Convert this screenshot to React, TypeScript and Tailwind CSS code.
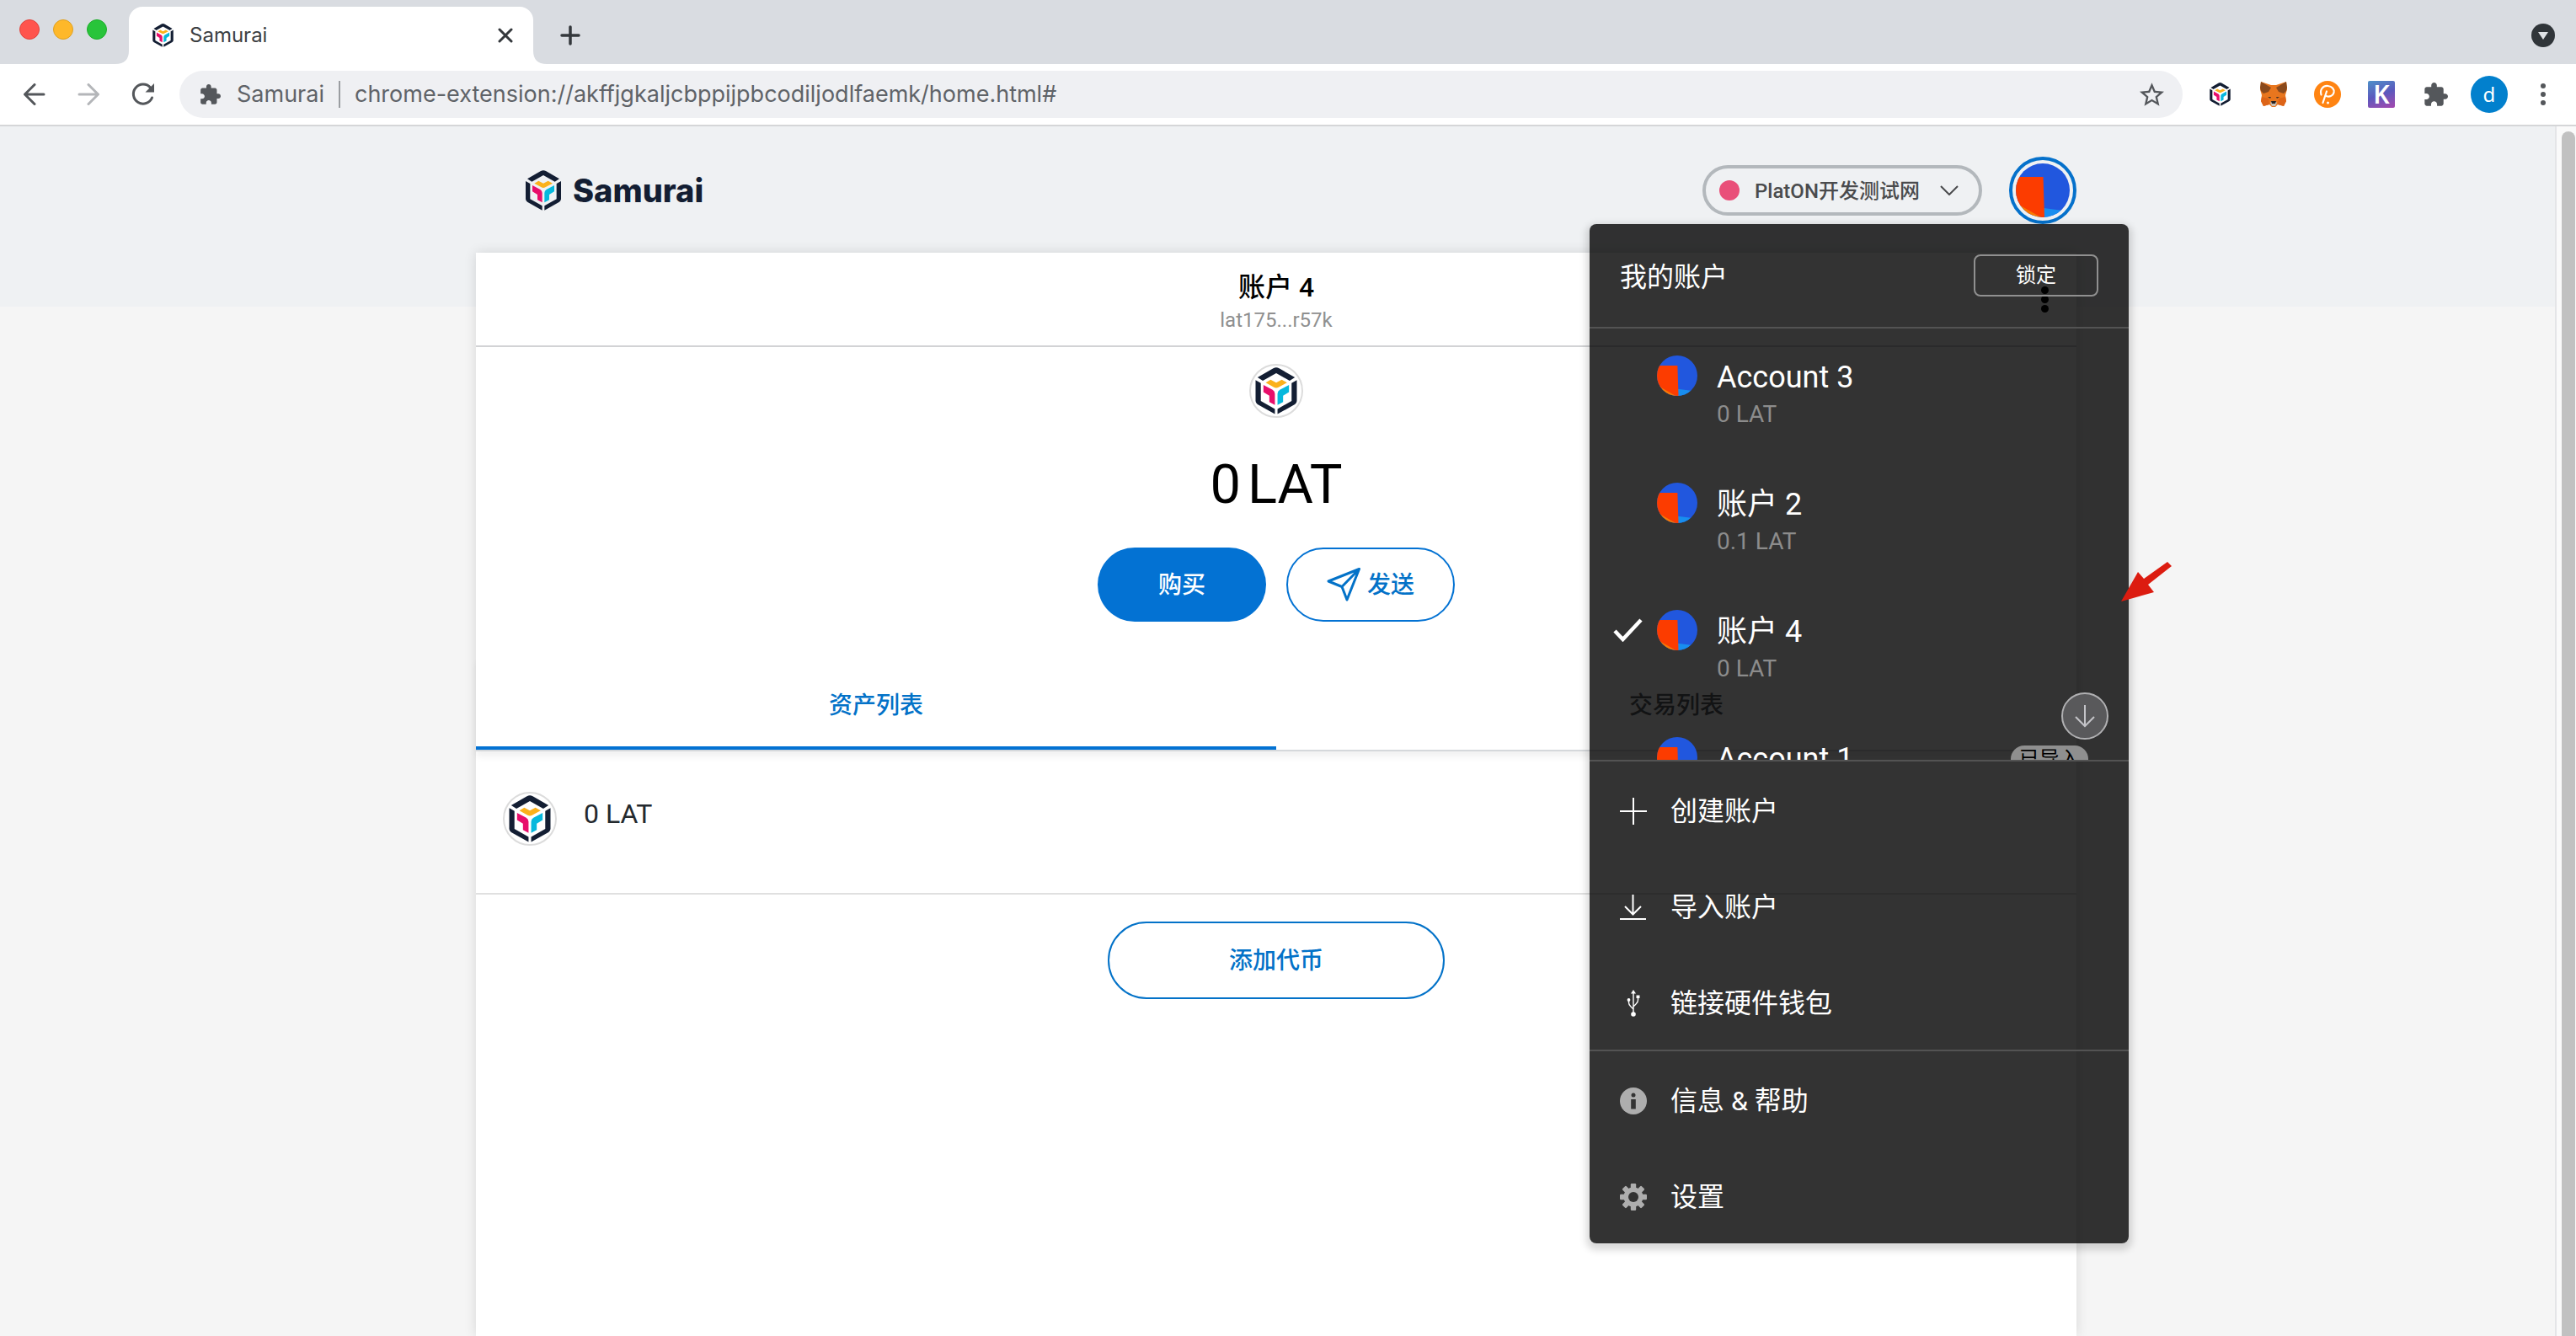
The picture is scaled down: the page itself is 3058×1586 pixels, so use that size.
import type { ReactNode } from "react";

const CJK = "font-['Roboto','Noto_Sans_CJK_SC',sans-serif]";

function SamuraiMark({ className }: { className: string }) {
  return (
    <svg viewBox="0 0 126 144" className={className} aria-hidden="true">
      <g fill="#131e33">
        <path d="M6 31 54 3Q63-2 72 3L120 31 104 41 63 18 22 41Z" />
        <path d="M0 39 16 48V103L59 127V143L6 113Q0 109 0 103Z" />
        <path d="M126 39 110 48V103L67 127V143L120 113Q126 109 126 103Z" />
      </g>
      <path fill="#fbb11b" d="M31 47 46 38 63 47 80 38 96 47 70 61Q63 65 56 61Z" />
      <path fill="#e80e6b" d="M24 54 52 69Q59 73 59 81V115L42 106V87L24 76Z" />
      <path fill="#06b8dd" d="M102 54 74 69Q67 73 67 81V115L84 106V87L102 76Z" />
    </svg>
  );
}

function Identicon({ className }: { className: string }) {
  return (
    <svg viewBox="0 0 64 64" className={`shrink-0 rounded-full ${className}`} aria-hidden="true">
      <rect width="64" height="64" fill="#2157de" />
      <path d="M33 53 64 57V64H33Z" fill="#188eef" />
      <path d="M0 46 34 66H0Z" fill="#fa7900" />
      <path d="M0 16H32.500L34 64H30L0 47Z" fill="#fc3c00" />
    </svg>
  );
}

function Puzzle({ className }: { className: string }) {
  return (
    <svg viewBox="1 1 22 22" className={className} fill="#54575b" aria-hidden="true">
      <path d="M20.500 11H19V7c0-1.100-.9-2-2-2h-4V3.500C13 2.120 11.880 1 10.500 1S8 2.120 8 3.500V5H4c-1.100 0-1.990.9-1.990 2v3.800H3.500c1.490 0 2.700 1.210 2.700 2.700s-1.210 2.700-2.700 2.700H2V20c0 1.100.9 2 2 2h3.800v-1.500c0-1.490 1.210-2.700 2.700-2.700s2.700 1.210 2.700 2.700V22H17c1.100 0 2-.9 2-2v-4h1.500c1.380 0 2.500-1.120 2.500-2.500S21.880 11 20.500 11z" />
    </svg>
  );
}

function TokenIcon() {
  return (
    <span className="flex size-[64px] shrink-0 items-center justify-center rounded-full border-2 border-[#dcdcdc] bg-white">
      <SamuraiMark className="h-[56px] w-[50px]" />
    </span>
  );
}

function TabStrip() {
  return (
    <div className="flex h-[76px] items-end bg-[#d9dce1]">
      <div className="flex h-full w-[153px] items-start gap-4 pt-[23px] pl-[23px]">
        <span className="size-6 rounded-full border border-[#e0443e] bg-[#ff544d]" />
        <span className="size-6 rounded-full border border-[#dea123] bg-[#feb82a]" />
        <span className="size-6 rounded-full border border-[#1dad2b] bg-[#28c43a]" />
      </div>
      <div className="relative flex h-[68px] w-[480px] items-center rounded-t-[16px] bg-white pr-[24px] pl-[28px]">
        <svg viewBox="0 0 16 16" className="absolute bottom-0 left-[-16px] size-4" fill="#fff" aria-hidden="true">
          <path d="M16 0V16H0Q16 16 16 0Z" />
        </svg>
        <svg viewBox="0 0 16 16" className="absolute right-[-16px] bottom-0 size-4" fill="#fff" aria-hidden="true">
          <path d="M0 0V16H16Q0 16 0 0Z" />
        </svg>
        <SamuraiMark className="h-[28px] w-[25px]" />
        <span className="ml-[19px] flex-1 font-['Inter',sans-serif] text-[24px] leading-8 text-[#3c4043]">Samurai</span>
        <button aria-label="Close tab">
          <svg viewBox="0 0 18 18" className="size-[18px]" stroke="#34383c" strokeWidth="3" strokeLinecap="round" aria-hidden="true">
            <path d="M2 2 16 16M16 2 2 16" />
          </svg>
        </button>
      </div>
      <button aria-label="New tab" className="mb-[22px] ml-[32px]">
        <svg viewBox="0 0 24 24" className="size-6" stroke="#34383c" strokeWidth="3.500" strokeLinecap="round" aria-hidden="true">
          <path d="M12 2V22M2 12H22" />
        </svg>
      </button>
      <button aria-label="Search tabs" className="mr-[25px] mb-[20px] ml-auto">
        <svg viewBox="0 0 28 28" className="size-7" aria-hidden="true">
          <circle cx="14" cy="14" r="14" fill="#303539" />
          <path d="M8 10H20L14 19Z" fill="#dfe2e6" />
        </svg>
      </button>
    </div>
  );
}

function Toolbar() {
  return (
    <div className="flex h-[74px] items-center border-b-2 border-[#d5d6d8] bg-white pr-[33px] pl-[28px] font-['Inter',sans-serif] text-[27px] leading-8 text-[#5f6368]">
      <div className="flex w-[185px] shrink-0 items-center gap-[38px]">
        <button aria-label="Back">
          <svg viewBox="0 0 26 26" className="size-[26px]" fill="none" stroke="#54575b" strokeWidth="3" strokeLinecap="round" strokeLinejoin="round" aria-hidden="true">
            <path d="M24 13H2M13 1.500 1.500 13 13 24.500" />
          </svg>
        </button>
        <button aria-label="Forward">
          <svg viewBox="0 0 26 26" className="size-[26px]" fill="none" stroke="#b4b6b9" strokeWidth="3" strokeLinecap="round" strokeLinejoin="round" aria-hidden="true">
            <path d="M2 13H24M13 1.500 24.500 13 13 24.500" />
          </svg>
        </button>
        <button aria-label="Reload">
          <svg viewBox="0 0 28 28" className="size-7" aria-hidden="true">
            <path d="M24.500 18A11.500 11.500 0 1 1 22.500 6" fill="none" stroke="#54575b" strokeWidth="3" strokeLinecap="round" />
            <path d="M27 1V11.500H16.500Z" fill="#54575b" />
          </svg>
        </button>
      </div>
      <div className="flex h-[56px] flex-1 items-center rounded-full bg-[#eff0f3] pr-[22px] pl-[24px]">
        <Puzzle className="size-[25px]" />
        <label htmlFor="address" className="ml-[19px]">Samurai</label>
        <span className="mx-[17px] h-8 w-[2px] bg-[#9a9da1]" />
        <input
          id="address"
          readOnly
          className="min-w-0 flex-1 bg-transparent outline-none"
          value="chrome-extension://akffjgkaljcbppijpbcodiljodlfaemk/home.html#"
        />
        <button aria-label="Bookmark this tab">
          <svg viewBox="2 2 20 19" className="h-[28px] w-[29px]" fill="#54575b" aria-hidden="true">
            <path d="M22 9.240l-7.190-.62L12 2 9.190 8.630 2 9.240l5.460 4.730L5.820 21 12 17.270 18.180 21l-1.630-7.030L22 9.240zM12 15.400l-3.760 2.270 1-4.280-3.320-2.880 4.380-.38L12 6.100l1.710 4.040 4.380.38-3.320 2.880 1 4.280L12 15.400z" />
          </svg>
        </button>
      </div>
      <div className="flex shrink-0 items-center pl-[32px]">
        <button aria-label="Samurai">
          <SamuraiMark className="h-[28px] w-[25px]" />
        </button>
        <button aria-label="MetaMask" className="ml-[35px]">
          <svg viewBox="0 0 32 30" className="h-[30px] w-[32px]" aria-hidden="true">
            <path d="M1 0 13 4H19L31 0 32 9 30 16 31 23 28 29 21 27 18 30H14L11 27 4 29 1 23 2 16 0 9Z" fill="#e8761e" />
            <path d="M1 0 13 7 10 12 4 14 1 11 0 7Z" fill="#8a4a1d" />
            <path d="M31 0 19 7 22 12 28 14 31 11 32 7Z" fill="#8a4a1d" />
            <path d="M2 18 10 20 11 27 4 29 1 23ZM30 18 22 20 21 27 28 29 31 23Z" fill="#dd6418" />
            <path d="M9 18 13 18 12 20ZM23 18 19 18 20 20Z" fill="#4a3226" />
            <path d="M12 25 14 23H18L20 25 18 29H14Z" fill="#c8bfb5" />
            <path d="M13 23H19L18 26H14Z" fill="#2a2220" />
          </svg>
        </button>
        <button aria-label="Polkadot wallet" className="ml-[32px]">
          <svg viewBox="0 0 32 32" className="size-8" aria-hidden="true">
            <circle cx="16" cy="16" r="16" fill="#ff8412" />
            <path d="M8.500 16.500C6.500 10 11 5.500 16.500 6 21.500 6.500 24.500 10 23.500 14 22.500 18 18 19.500 14.500 18M15 12.500 10.500 26" fill="none" stroke="#fff" strokeWidth="2.200" strokeLinecap="round" />
            <circle cx="16.500" cy="26" r="1.500" fill="#fff" />
          </svg>
        </button>
        <button
          aria-label="K extension"
          className="ml-[32px] flex size-8 items-center justify-center rounded-[2px] bg-linear-160 from-[#4a90c8] via-[#5b58bd] to-[#a445ae] font-['Noto_Sans',sans-serif] text-[30px] leading-8 font-semibold text-white"
        >
          K
        </button>
        <button aria-label="Extensions" className="ml-[34px]">
          <Puzzle className="size-[29px]" />
        </button>
        <button aria-label="Profile" className="ml-[27px] size-[44px] rounded-full bg-[#0280cd] font-['Noto_Sans',sans-serif] text-[24px] leading-8 text-white">
          d
        </button>
        <button aria-label="Chrome menu" className="ml-[36px] flex w-3 flex-col items-center gap-1">
          <span className="size-[6px] rounded-full bg-[#54575b]" />
          <span className="size-[6px] rounded-full bg-[#54575b]" />
          <span className="size-[6px] rounded-full bg-[#54575b]" />
        </button>
      </div>
    </div>
  );
}

const accounts = [
  { name: "Account 3", balance: "0 LAT", active: false, imported: false },
  { name: "账户 2", balance: "0.1 LAT", active: false, imported: false },
  { name: "账户 4", balance: "0 LAT", active: true, imported: false },
  { name: "Account 1", balance: "0 LAT", active: false, imported: true },
];

function MenuItem({ icon, children }: { icon: ReactNode; children: ReactNode }) {
  return (
    <button className="flex h-[114px] w-full items-center gap-[28px] px-[36px] pt-1 text-left text-[32px] leading-10">
      <span className="flex size-8 shrink-0 items-center justify-center">{icon}</span>
      <span>{children}</span>
    </button>
  );
}

function AccountMenu() {
  return (
    <div className="absolute top-[116px] right-[-62px] z-10 w-[640px] rounded-[8px] bg-black/80 text-white shadow-[0_4px_8px_4px_rgba(0,0,0,0.15)]">
      <div className="flex h-[124px] items-start justify-between border-b-2 border-[#535353] px-[36px] pt-[36px]">
        <h2 className="text-[32px] leading-[54px]">我的账户</h2>
        <button className="h-[50px] w-[148px] rounded-[8px] border-2 border-[#909090] text-[24px] leading-[44px]">锁定</button>
      </div>
      <div className="relative h-[514px] border-b-2 border-[#535353]">
        <ul className="h-full overflow-hidden">
          {accounts.map((a) => (
            <li key={a.name} className="flex h-[151px] items-start pt-[32px] pr-[48px] pl-[28px]">
              <span className="flex h-12 w-[52px] shrink-0 items-center">
                {a.active && (
                  <svg viewBox="0 0 35 28" className="h-[28px] w-[35px]" fill="none" stroke="#fff" strokeWidth="4.500" aria-label="selected">
                    <path d="M2 15 11.500 25 33 2" />
                  </svg>
                )}
              </span>
              <Identicon className="size-12" />
              <div className="ml-[23px] flex-1">
                <div className="h-[52px] text-[36px] leading-[52px]">{a.name}</div>
                <div className="text-[28px] leading-9 text-[#8c8c8c]">{a.balance}</div>
              </div>
              {a.imported && (
                <span className="mt-[10px] rounded-[20px] bg-[#8f8f8f] px-[10px] text-[24px] leading-8 text-black">已导入</span>
              )}
            </li>
          ))}
        </ul>
        <button
          aria-label="Scroll down"
          className="absolute right-[24px] bottom-[24px] flex size-[56px] items-center justify-center rounded-full border-2 border-[#b0b0b2] bg-[#59595b]"
        >
          <svg viewBox="0 0 24 28" className="h-[28px] w-[24px]" fill="none" stroke="#c4c4c8" strokeWidth="2" aria-hidden="true">
            <path d="M12 1V26M1 15 12 26 23 15" />
          </svg>
        </button>
      </div>
      <div className="border-b-2 border-[#535353]">
        <MenuItem
          icon={
            <svg viewBox="0 0 32 32" className="size-8" stroke="#fff" strokeWidth="2" aria-hidden="true">
              <path d="M16 0V32M0 16H32" />
            </svg>
          }
        >
          创建账户
        </MenuItem>
        <MenuItem
          icon={
            <svg viewBox="0 0 32 32" className="size-8" fill="none" stroke="#fff" strokeWidth="2" aria-hidden="true">
              <path d="M15.500 1V24M6 15 15.500 24.500 25 15M0 30H31" />
            </svg>
          }
        >
          导入账户
        </MenuItem>
        <MenuItem
          icon={
            <svg viewBox="0 0 16 32" className="h-8 w-4" fill="none" stroke="#fff" strokeWidth="1.400" aria-hidden="true">
              <path d="M8 3V28M2.500 12V15Q2.500 18 5 20L8 23M13.500 9V12Q13.500 15 11 17L8 20" />
              <path d="M8 0 11 4.500H5Z" fill="#fff" stroke="none" />
              <circle cx="8" cy="29" r="2.800" fill="#fff" stroke="none" />
              <circle cx="2.500" cy="12" r="1.900" fill="#fff" stroke="none" />
              <path d="M11.500 6.500H15.500V10H11.500Z" fill="#fff" stroke="none" />
            </svg>
          }
        >
          链接硬件钱包
        </MenuItem>
      </div>
      <div>
        <MenuItem
          icon={
            <svg viewBox="0 0 32 32" className="size-8" aria-hidden="true">
              <circle cx="16" cy="16" r="16" fill="#aeaeae" />
              <circle cx="16" cy="9" r="2.500" fill="#333" />
              <path d="M13.200 14H18.800V25.500H13.200Z" fill="#333" />
            </svg>
          }
        >
          信息 &amp; 帮助
        </MenuItem>
        <MenuItem
          icon={
            <svg viewBox="0 0 32 32" className="size-8" aria-hidden="true">
              <g fill="#aeaeae">
                <path d="M12.800 1.200Q12.800 0 14 0H18Q19.200 0 19.200 1.200V30.800Q19.200 32 18 32H14Q12.800 32 12.800 30.800Z" />
                <path d="M12.800 1.200Q12.800 0 14 0H18Q19.200 0 19.200 1.200V30.800Q19.200 32 18 32H14Q12.800 32 12.800 30.800Z" transform="rotate(45 16 16)" />
                <path d="M12.800 1.200Q12.800 0 14 0H18Q19.200 0 19.200 1.200V30.800Q19.200 32 18 32H14Q12.800 32 12.800 30.800Z" transform="rotate(90 16 16)" />
                <path d="M12.800 1.200Q12.800 0 14 0H18Q19.200 0 19.200 1.200V30.800Q19.200 32 18 32H14Q12.800 32 12.800 30.800Z" transform="rotate(135 16 16)" />
                <circle cx="16" cy="16" r="11.500" />
              </g>
              <circle cx="16" cy="16" r="6" fill="#333" />
            </svg>
          }
        >
          设置
        </MenuItem>
      </div>
      <svg viewBox="0 0 60 48" className="absolute top-[401px] left-[631px] h-[48px] w-[60px]" fill="#dc1c10" aria-hidden="true">
        <path d="M0 47 20 12 27 20 55 0 60 5 32 27 39 36Z" />
      </svg>
    </div>
  );
}

function WalletHeader() {
  return (
    <header className="relative flex items-center pt-[36px] pb-[34px] pl-[59px]">
      <a href="#" className="flex items-center gap-[14px] font-['Inter',sans-serif] text-[38px] leading-[48px] font-extrabold text-[#131e33]">
        <SamuraiMark className="h-[48px] w-[42px]" />
        Samurai
      </a>
      <button className="mr-[32px] ml-auto flex h-[60px] w-[332px] items-center rounded-full border-4 border-[#b3b8bc] pr-[24px] pl-[16px] text-[24px] leading-8 font-medium text-[#4a4b4d]">
        <span className="mr-[18px] size-6 rounded-full bg-[#e94f79]" />
        <span className="pt-[2px]">PlatON开发测试网</span>
        <svg viewBox="0 0 22 12" className="ml-auto h-[12px] w-[22px]" fill="none" stroke="#4a4b4d" strokeWidth="2" aria-hidden="true">
          <path d="M1 1 11 11 21 1" />
        </svg>
      </button>
      <button aria-label="Account menu" className="flex size-[80px] items-center justify-center rounded-full border-4 border-[#0571cb]">
        <Identicon className="size-[64px]" />
      </button>
      <AccountMenu />
    </header>
  );
}

function WalletCard() {
  return (
    <main className="flex-1 bg-white shadow-[0_0_14px_rgba(0,0,0,0.12)]">
      <div className="relative flex h-[112px] flex-col items-center border-b-2 border-[#d2d3d5] pt-[20px]">
        <h1 className="text-[32px] leading-[42px] font-medium text-black">账户 4</h1>
        <p className="text-[24px] leading-9 text-[#8f8f8f]">lat175...r57k</p>
        <button aria-label="Account options" className="absolute top-[40px] right-[33px] flex flex-col gap-[2px]">
          <span className="size-[9px] rounded-full bg-black" />
          <span className="size-[9px] rounded-full bg-black" />
          <span className="size-[9px] rounded-full bg-black" />
        </button>
      </div>
      <section className="flex flex-col items-center pt-[20px]">
        <TokenIcon />
        <div className="mt-[40px] flex gap-[8px] text-[65px] leading-[78px] text-black">
          <span>0</span>
          <span>LAT</span>
        </div>
        <div className="mt-[36px] flex gap-[24px] text-[28px] leading-9 font-medium">
          <button className="h-[88px] w-[200px] rounded-full bg-[#0372d3] pt-[2px] text-white">购买</button>
          <button className="flex h-[88px] w-[200px] items-center justify-center gap-[8px] rounded-full border-2 border-[#0372d3] text-[#0372c8]">
            <svg viewBox="0 0 40 40" className="size-[40px]" fill="none" stroke="#0372c8" strokeWidth="3" strokeLinejoin="round" aria-hidden="true">
              <path d="M38.500 1.500 2 16 18 22.500 24 38ZM38.500 1.500 18 22.500" />
            </svg>
            <span className="pt-[2px]">发送</span>
          </button>
        </div>
      </section>
      <div role="tablist" className="mt-[42px] flex border-b-2 border-[#d5d8db] text-[28px] leading-9 font-medium shadow-[0_6px_8px_rgba(0,0,0,0.06)]">
        <button role="tab" aria-selected="true" className="h-[110px] flex-1 border-b-4 border-[#0372d3] pt-[10px] text-[#0372c8]">
          资产列表
        </button>
        <button role="tab" aria-selected="false" className="h-[110px] flex-1 border-b-4 border-transparent pt-[10px] text-[#5c6166]">
          交易列表
        </button>
      </div>
      <div className="flex h-[170px] items-start gap-[32px] border-b-2 border-[#e0e0e0] pt-[48px] pl-[32px]">
        <TokenIcon />
        <span className="text-[32px] leading-[52px] text-[#24292e]">0 LAT</span>
      </div>
      <div className="flex justify-center pt-[32px]">
        <button className="h-[92px] w-[400px] rounded-full border-2 border-[#0372c8] pt-[2px] text-[28px] leading-9 font-medium text-[#0372c8]">
          添加代币
        </button>
      </div>
    </main>
  );
}

export default function App() {
  return (
    <div className={`flex h-screen flex-col overflow-hidden ${CJK}`}>
      <TabStrip />
      <Toolbar />
      <div className="flex min-h-0 flex-1">
        <div className="flex min-w-0 flex-1 flex-col bg-[linear-gradient(#eff1f3_214px,#f5f5f5_214px)] pr-[3px]">
          <div className="mx-auto flex w-full max-w-[1900px] flex-1 flex-col">
            <WalletHeader />
            <WalletCard />
          </div>
        </div>
        <div className="w-[25px] border-l-2 border-[#e4e5e7] bg-[#fafafa] pt-[6px] pl-[6px]">
          <div className="h-full w-[16px] rounded-t-full bg-[#c1c1c1]" />
        </div>
      </div>
    </div>
  );
}
